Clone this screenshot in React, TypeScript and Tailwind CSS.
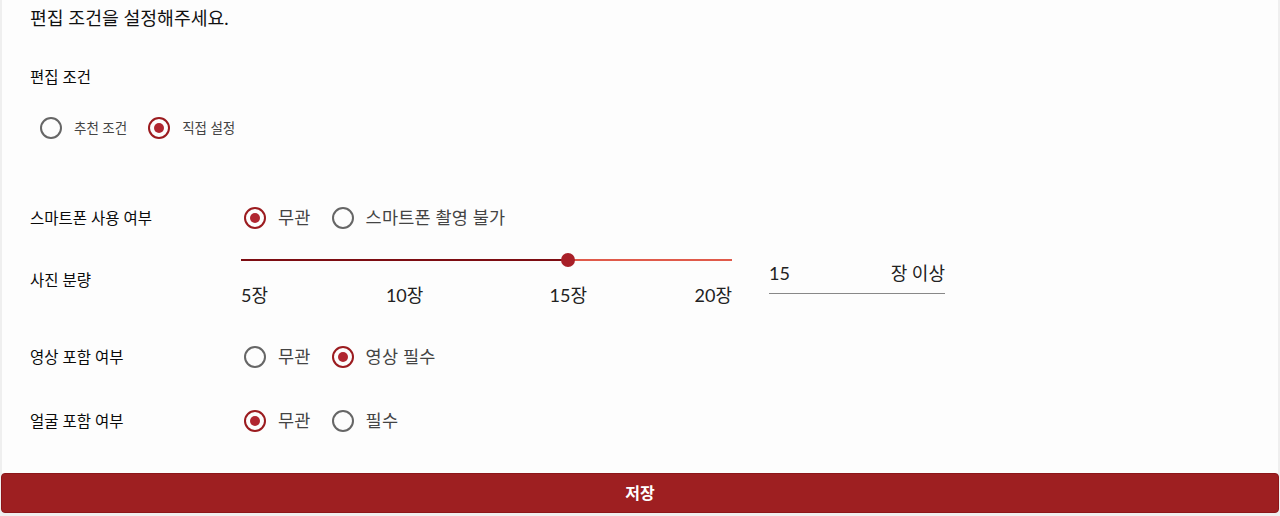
type Opt = { label: string; checked?: boolean };

const Radio = ({ label, checked, small }: Opt & { small?: boolean }) => (
  <label className="flex items-center cursor-pointer">
    <span
      className={`w-[22px] h-[22px] rounded-full border-2 flex items-center justify-center ${
        checked ? "border-[#9b1b1f]" : "border-[#666666]"
      }`}
    >
      {checked && <span className="w-[10px] h-[10px] rounded-full bg-[#b02630]" />}
    </span>
    <span
      className={`ml-[12px] text-[#444444] ${
        small ? "text-[13.5px] leading-[18px]" : "text-[17.5px] leading-[22px] tracking-[0.2px]"
      }`}
    >
      {label}
    </span>
  </label>
);

const RadioGroup = ({ options, small }: { options: Opt[]; small?: boolean }) => (
  <div className="flex items-center gap-[21px]">
    {options.map((o) => (
      <Radio key={o.label} {...o} small={small} />
    ))}
  </div>
);

const RowLabel = ({ children, className = "w-[214px]" }: { children: React.ReactNode; className?: string }) => (
  <div className={`shrink-0 text-[15.5px] leading-[20px] text-[#0a0a0a] ${className}`}>{children}</div>
);

const marks = [
  { label: "5장", cls: "left-0" },
  { label: "10장", cls: "left-[33.333%] -translate-x-1/2" },
  { label: "15장", cls: "left-[66.667%] -translate-x-1/2" },
  { label: "20장", cls: "right-0" },
];

const PhotoSlider = () => (
  <div className="w-[491px]">
    <div className="relative h-[16px]">
      <div className="absolute left-0 top-[7px] h-[2px] w-[66.667%] bg-[#7d0d12]" />
      <div className="absolute right-0 top-[7px] h-[2px] w-[33.333%] bg-[#e05a4a]" />
      <div className="absolute left-[66.667%] top-[1px] -translate-x-1/2 w-[14px] h-[14px] rounded-full bg-[#a81f28]" />
    </div>
    <div className="relative mt-[16px] h-[22px] text-[18px] leading-[22px] text-[#222222]">
      {marks.map((m) => (
        <span key={m.label} className={`absolute top-0 whitespace-nowrap ${m.cls}`}>
          {m.label}
        </span>
      ))}
    </div>
  </div>
);

export default function App() {
  return (
    <div
      className="h-[516px] w-full flex flex-col bg-[#efefef]"
      style={{ fontFamily: 'Lato, "Noto Sans CJK KR", sans-serif' }}
    >
      <div className="mx-[2px] flex-1 bg-[#fdfdfd] pl-[28px] pt-[6px]">
        <h1 className="text-[18.3px] leading-[24px] text-[#111111]">편집 조건을 설정해주세요.</h1>

        <div className="mt-[37px] text-[15.5px] leading-[20px] text-[#0a0a0a]">편집 조건</div>

        <div className="mt-[30px] h-[22px] pl-[10px]">
          <RadioGroup small options={[{ label: "추천 조건" }, { label: "직접 설정", checked: true }]} />
        </div>

        <div className="mt-[68px] flex items-center h-[22px]">
          <RowLabel>스마트폰 사용 여부</RowLabel>
          <RadioGroup options={[{ label: "무관", checked: true }, { label: "스마트폰 촬영 불가" }]} />
        </div>

        <div className="mt-[23px] flex items-start">
          <RowLabel className="mt-[18px] w-[211px]">사진 분량</RowLabel>
          <PhotoSlider />
          <div className="ml-[37px] mt-[11px] w-[176px] flex justify-between border-b border-[#888888] pb-[10px] text-[18px] leading-[20px] text-[#222222]">
            <span>15</span>
            <span>장 이상</span>
          </div>
        </div>

        <div className="mt-[40px] flex items-center h-[22px]">
          <RowLabel>영상 포함 여부</RowLabel>
          <RadioGroup options={[{ label: "무관" }, { label: "영상 필수", checked: true }]} />
        </div>

        <div className="mt-[42px] flex items-center h-[22px]">
          <RowLabel>얼굴 포함 여부</RowLabel>
          <RadioGroup options={[{ label: "무관", checked: true }, { label: "필수" }]} />
        </div>
      </div>

      <button className="mx-[1px] mb-[3px] h-[40px] rounded-[4px] border border-[#8c1619] bg-[#9e1f21] text-[16px] font-bold text-white">
        저장
      </button>
    </div>
  );
}
